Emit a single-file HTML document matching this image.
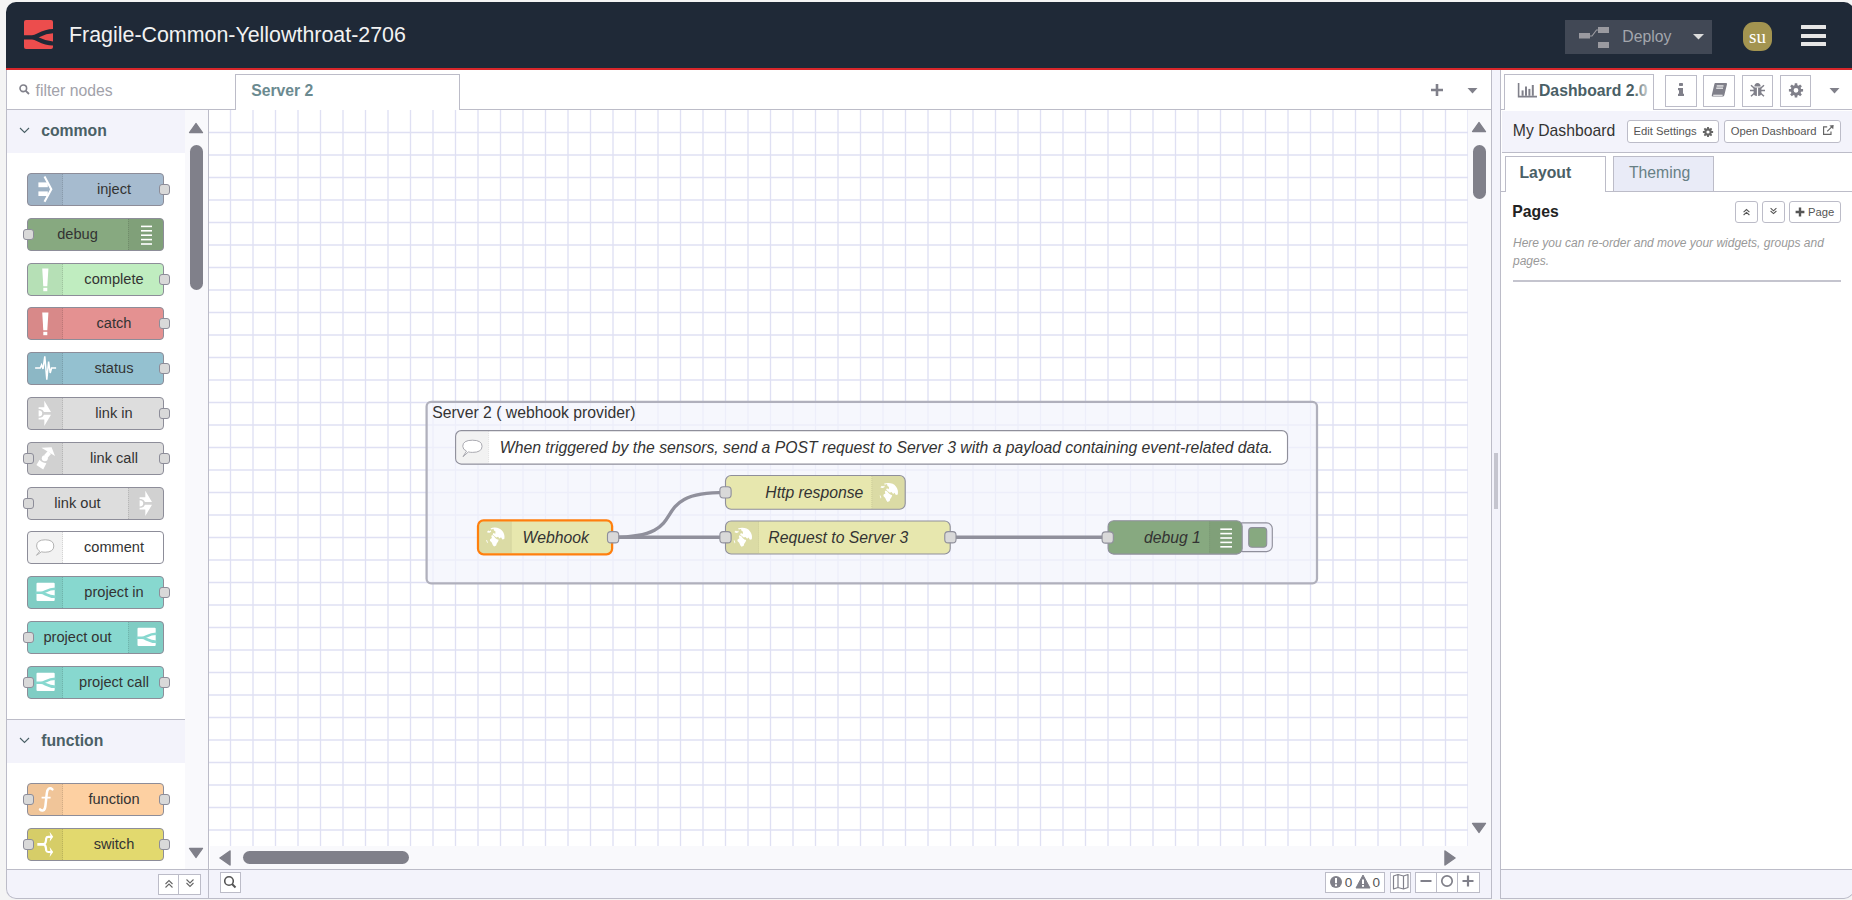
<!DOCTYPE html><html><head><meta charset="utf-8"><style>
*{box-sizing:border-box;margin:0;padding:0}
html,body{width:1852px;height:900px;overflow:hidden;position:relative;background:#f4f4f4;font-family:"Liberation Sans",sans-serif;}
.a{position:absolute}
.t{position:absolute;white-space:nowrap;line-height:1}
#clip{position:absolute;left:6px;top:2px;width:1848px;height:897px;border-radius:10px;overflow:hidden;background:#fff}
#pg{position:absolute;left:-6px;top:-2px;width:1853px;height:900px}
#frame{position:absolute;left:6px;top:70px;width:1848px;height:829px;border-radius:0 0 10px 10px;border:1px solid #bcbcc8;border-top:none;pointer-events:none}
.hl{position:absolute;height:1px;background:#bcbcc8}
.vl{position:absolute;width:1px;background:#bcbcc8}
.lav{background:#f3f3fb}
.pn{position:absolute;left:27px;width:137px;height:33px;border:1px solid #8d8d99;border-radius:4px;overflow:hidden}
.pi{position:absolute;top:0;width:35px;height:31px;background:rgba(0,0,0,0.05)}
.pi svg{position:absolute;left:0;top:0}
.pil{left:0;border-right:1px dotted rgba(0,0,0,0.12)}
.pir{right:0;border-left:1px dotted rgba(0,0,0,0.12)}
.pl{position:absolute;top:0;height:31px;line-height:31px;font-size:14.625px;color:#333;text-align:center;white-space:nowrap}
.pt{position:absolute;width:11px;height:11px;background:#d9d9d9;border:1px solid #8d8d99;border-radius:3px}
.fb{position:absolute;border:1px solid #bcbcc8;background:#fff}
</style></head><body>
<div id="clip"><div id="pg">
<div class="a" style="left:0;top:0;width:1853px;height:68px;background:#1f2937"></div>
<div class="a" style="left:0;top:68px;width:1853px;height:2px;background:#d8272b"></div>
<svg class="a" style="left:24px;top:20px" width="29" height="29" viewBox="0 0 29 29"><rect x="0" y="0" width="29" height="29" rx="2" fill="#ec4d4d"/><path d="M-1,17.3 H8 C14,17.3 17,11.2 30,11.2 M8,17.3 C14,17.3 17,23.5 30,23.5" stroke="#1f2937" stroke-width="4.2" fill="none"/></svg>
<div class="t" style="left:69.00px;top:24.88px;font-size:21.400px;color:#f2f2f2;font-weight:400;font-style:normal;">Fragile-Common-Yellowthroat-2706</div>
<div class="a" style="left:1565px;top:20px;width:147px;height:34px;background:#414855"></div>
<svg class="a" style="left:1579px;top:27px" width="31" height="22" viewBox="0 0 31 22"><rect x="0" y="6" width="11" height="5.5" fill="#9a9aa0"/><rect x="19" y="0" width="11" height="6" fill="#9a9aa0"/><rect x="19" y="15" width="11" height="6" fill="#9a9aa0"/><path d="M11,9 L13,9 L17.5,3 L19,3" stroke="#9a9aa0" stroke-width="1.2" fill="none"/></svg>
<div class="t" style="left:1622.30px;top:28.67px;font-size:15.750px;color:#a3a6ad;font-weight:400;font-style:normal;">Deploy</div>
<svg class="a" style="left:1693px;top:34px" width="11" height="6" viewBox="0 0 11 6"><path d="M0,0 H11 L5.5,5.5Z" fill="#dcdcdc"/></svg>
<div class="a" style="left:1743px;top:22px;width:29px;height:29px;border-radius:11px;background:#a39450"></div>
<div class="t" style="left:1743px;top:26.67px;width:29px;text-align:center;font-family:'Liberation Serif',serif;font-size:19px;color:#fff">su</div>
<div class="a" style="left:1801px;top:25.0px;width:25px;height:4px;background:#e6e6e6;border-radius:0.5px"></div>
<div class="a" style="left:1801px;top:33.5px;width:25px;height:4px;background:#e6e6e6;border-radius:0.5px"></div>
<div class="a" style="left:1801px;top:42.0px;width:25px;height:4px;background:#e6e6e6;border-radius:0.5px"></div>
<div class="a" style="left:7px;top:70px;width:201px;height:39px;background:#fff"></div>
<div class="hl" style="left:6px;top:109px;width:203px"></div>
<svg class="a" style="left:19px;top:84px" width="11" height="11" viewBox="0 0 11 11"><circle cx="4.3" cy="4.3" r="3.3" stroke="#80808a" stroke-width="1.6" fill="none"/><path d="M6.8,6.8 L10,10" stroke="#80808a" stroke-width="1.8"/></svg>
<div class="t" style="left:35.60px;top:82.57px;font-size:15.750px;color:#a2a2aa;font-weight:400;font-style:normal;">filter nodes</div>
<div class="a lav" style="left:7px;top:110px;width:178px;height:43px"></div>
<svg class="a" style="left:19px;top:127px" width="11" height="7" viewBox="0 0 11 7"><path d="M1,1 L5.5,5.5 L10,1" stroke="#4a6066" stroke-width="1.1" fill="none"/></svg>
<div class="t" style="left:41.20px;top:123.47px;font-size:15.750px;color:#4a6066;font-weight:700;font-style:normal;">common</div>
<div class="hl" style="left:7px;top:719px;width:178px"></div>
<div class="a lav" style="left:7px;top:720px;width:178px;height:43px"></div>
<svg class="a" style="left:19px;top:737px" width="11" height="7" viewBox="0 0 11 7"><path d="M1,1 L5.5,5.5 L10,1" stroke="#4a6066" stroke-width="1.1" fill="none"/></svg>
<div class="t" style="left:41.20px;top:733.47px;font-size:15.750px;color:#4a6066;font-weight:700;font-style:normal;">function</div>
<div class="a" style="left:185px;top:110px;width:23px;height:759px;background:#f9f9fc"></div>
<svg class="a" style="left:188px;top:122px" width="16" height="12" viewBox="0 0 16 12"><path d="M8,1.6 L14.4,10.6 H1.6 Z" fill="#80808a" stroke="#80808a" stroke-width="1.5" stroke-linejoin="round"/></svg>
<div class="a" style="left:190px;top:145px;width:13px;height:145px;border-radius:6.5px;background:#80808a"></div>
<svg class="a" style="left:188px;top:847px" width="16" height="12" viewBox="0 0 16 12"><path d="M8,10.4 L14.4,1.4 H1.6 Z" fill="#80808a" stroke="#80808a" stroke-width="1.5" stroke-linejoin="round"/></svg>
<div class="vl" style="left:208px;top:109px;height:790px"></div>
<div class="hl" style="left:6px;top:869px;width:203px"></div>
<div class="a lav" style="left:7px;top:870px;width:201px;height:30px"></div>
<div class="fb" style="left:158px;top:874px;width:21px;height:21px"></div>
<div class="fb" style="left:178px;top:874px;width:23px;height:21px"></div>
<svg class="a" style="left:163px;top:878px" width="12" height="12" viewBox="0 0 12 12"><path d="M2.5,6 L6,2.5 L9.5,6 M2.5,9.5 L6,6 L9.5,9.5" stroke="#666" stroke-width="1.1" fill="none"/></svg>
<svg class="a" style="left:184px;top:877px" width="12" height="12" viewBox="0 0 12 12"><path d="M2.5,2.5 L6,6 L9.5,2.5 M2.5,6 L6,9.5 L9.5,6" stroke="#666" stroke-width="1.1" fill="none"/></svg>
<div class="pn" style="top:173.20px;background:#a6bbcf">
<div class="pi pil"><svg width="35" height="31" viewBox="0 0 35 31"><rect x="10.4" y="8.4" width="9.4" height="4.8" fill="#fff"/><rect x="10.4" y="17.4" width="9.4" height="4.6" fill="#fff"/><path d="M16.5,2.6 L23.3,15.2 L16.5,27.8" stroke="#fff" stroke-width="2.1" fill="none" stroke-linejoin="miter"/></svg></div>
<div class="pl" style="left:36px;width:100px">inject</div>
</div>
<div class="pt" style="left:159px;top:184.20px"></div>
<div class="pn" style="top:217.96px;background:#87a980">
<div class="pi pir"><svg width="35" height="31" viewBox="0 0 35 31"><rect x="12" y="6.6" width="11" height="1.6" fill="#fff"/><rect x="12" y="11.0" width="11" height="1.6" fill="#fff"/><rect x="12" y="15.4" width="11" height="1.6" fill="#fff"/><rect x="12" y="19.8" width="11" height="1.6" fill="#fff"/><rect x="12" y="24.2" width="11" height="1.6" fill="#fff"/></svg></div>
<div class="pl" style="left:-1px;width:101px">debug</div>
</div>
<div class="pt" style="left:23px;top:228.96px"></div>
<div class="pn" style="top:262.72px;background:#c0edc0">
<div class="pi pil"><svg width="35" height="31" viewBox="0 0 35 31"><path d="M14.2,4.6 H20.4 L19.3,22.2 H15.3 Z" fill="#fff"/><rect x="15.3" y="23.8" width="4" height="3.4" fill="#fff"/></svg></div>
<div class="pl" style="left:36px;width:100px">complete</div>
</div>
<div class="pt" style="left:159px;top:273.72px"></div>
<div class="pn" style="top:307.48px;background:#e49191">
<div class="pi pil"><svg width="35" height="31" viewBox="0 0 35 31"><path d="M14.2,4.6 H20.4 L19.3,22.2 H15.3 Z" fill="#fff"/><rect x="15.3" y="23.8" width="4" height="3.4" fill="#fff"/></svg></div>
<div class="pl" style="left:36px;width:100px">catch</div>
</div>
<div class="pt" style="left:159px;top:318.48px"></div>
<div class="pn" style="top:352.24px;background:#94c1d0">
<div class="pi pil"><svg width="35" height="31" viewBox="0 0 35 31"><path d="M7.1,15 H12.3 L13.6,11.8 L15,16 L16.8,3.4 L18.8,26.6 L20.6,8.6 L22.2,20 L23.6,15 H28.1" stroke="#fff" stroke-width="1.5" fill="none" stroke-linejoin="miter"/></svg></div>
<div class="pl" style="left:36px;width:100px">status</div>
</div>
<div class="pt" style="left:159px;top:363.24px"></div>
<div class="pn" style="top:397.00px;background:#dddddd">
<div class="pi pil"><svg width="35" height="31" viewBox="0 0 35 31"><g fill="#fff"><path d="M16.3,2.7 L23,14.1 H16 Q15,11.4 12.2,11.1 H10.6 V9.3 H16.3 Z"/><path d="M16.3,28.1 L23,16.7 H16 Q15,19.4 12.2,19.7 H10.6 V21.5 H16.3 Z"/><path d="M10.6,12.3 Q14.2,12.5 14.2,15.4 Q14.2,18.3 10.6,18.5 Z"/></g></svg></div>
<div class="pl" style="left:36px;width:100px">link in</div>
</div>
<div class="pt" style="left:159px;top:408.00px"></div>
<div class="pn" style="top:441.76px;background:#dddddd">
<div class="pi pil"><svg width="35" height="31" viewBox="0 0 35 31"><g fill="#fff"><path d="M13.4,4.8 L23.6,4.3 L27,13 Z"/><path d="M21.4,9.6 L17.8,13.4" stroke="#fff" stroke-width="4.4"/><circle cx="16.8" cy="15.2" r="3"/><path d="M8.4,22 L11.6,16.8 Q13.4,19.6 18.4,20.2 L15.2,26.6 Z"/></g></svg></div>
<div class="pl" style="left:36px;width:100px">link call</div>
</div>
<div class="pt" style="left:23px;top:452.76px"></div>
<div class="pt" style="left:159px;top:452.76px"></div>
<div class="pn" style="top:486.52px;background:#dddddd">
<div class="pi pir"><svg width="35" height="31" viewBox="0 0 35 31"><g fill="#fff"><path d="M16.3,2.7 L23,14.1 H16 Q15,11.4 12.2,11.1 H10.6 V9.3 H16.3 Z"/><path d="M16.3,28.1 L23,16.7 H16 Q15,19.4 12.2,19.7 H10.6 V21.5 H16.3 Z"/><path d="M10.6,12.3 Q14.2,12.5 14.2,15.4 Q14.2,18.3 10.6,18.5 Z"/></g></svg></div>
<div class="pl" style="left:-1px;width:101px">link out</div>
</div>
<div class="pt" style="left:23px;top:497.52px"></div>
<div class="pn" style="top:531.28px;background:#ffffff">
<div class="pi pil"><svg width="35" height="31" viewBox="0 0 35 31"><path d="M8.5,23.3 L11.8,19.2 Q8.6,17.6 8.6,14 Q8.6,7.8 17.2,7.8 Q25.8,7.8 25.8,14 Q25.8,20.2 17.2,20.2 Q15,20.2 13.4,19.8 Z" fill="#fff" stroke="#aaa" stroke-width="0.9" stroke-linejoin="round"/></svg></div>
<div class="pl" style="left:36px;width:100px">comment</div>
</div>
<div class="pn" style="top:576.04px;background:#87d8cf">
<div class="pi pil"><svg width="35" height="31" viewBox="0 0 35 31"><rect x="8.5" y="5.8" width="18.2" height="18.2" rx="1" fill="#fff"/><path d="M7.5,15.8 H13 C17,15.8 19,11.8 27.5,11.8 M13,15.8 C17,15.8 19,19.8 27.5,19.8" stroke="#87d8cf" stroke-width="2.6" fill="none"/></svg></div>
<div class="pl" style="left:36px;width:100px">project in</div>
</div>
<div class="pt" style="left:159px;top:587.04px"></div>
<div class="pn" style="top:620.80px;background:#87d8cf">
<div class="pi pir"><svg width="35" height="31" viewBox="0 0 35 31"><rect x="8.5" y="5.8" width="18.2" height="18.2" rx="1" fill="#fff"/><path d="M7.5,15.8 H13 C17,15.8 19,11.8 27.5,11.8 M13,15.8 C17,15.8 19,19.8 27.5,19.8" stroke="#87d8cf" stroke-width="2.6" fill="none"/></svg></div>
<div class="pl" style="left:-1px;width:101px">project out</div>
</div>
<div class="pt" style="left:23px;top:631.80px"></div>
<div class="pn" style="top:665.56px;background:#87d8cf">
<div class="pi pil"><svg width="35" height="31" viewBox="0 0 35 31"><rect x="8.5" y="5.8" width="18.2" height="18.2" rx="1" fill="#fff"/><path d="M7.5,15.8 H13 C17,15.8 19,11.8 27.5,11.8 M13,15.8 C17,15.8 19,19.8 27.5,19.8" stroke="#87d8cf" stroke-width="2.6" fill="none"/></svg></div>
<div class="pl" style="left:36px;width:100px">project call</div>
</div>
<div class="pt" style="left:23px;top:676.56px"></div>
<div class="pt" style="left:159px;top:676.56px"></div>
<div class="pn" style="top:783.40px;background:#fdd0a2">
<div class="pi pil"><svg width="35" height="31" viewBox="0 0 35 31"><path d="M24.4,5.4 Q22.4,3.6 20.6,4.8 Q19.2,5.8 18.8,9.4 L17.4,22 Q17,25.6 15.2,26.4 Q13.4,27 12,25.4" stroke="#fff" stroke-width="2.5" fill="none" stroke-linecap="round"/><path d="M13.6,13.6 H22.6" stroke="#fff" stroke-width="1.8"/></svg></div>
<div class="pl" style="left:36px;width:100px">function</div>
</div>
<div class="pt" style="left:23px;top:794.40px"></div>
<div class="pt" style="left:159px;top:794.40px"></div>
<div class="pn" style="top:828.20px;background:#e2d96e">
<div class="pi pil"><svg width="35" height="31" viewBox="0 0 35 31"><path d="M9.3,15.4 H15.4" stroke="#fff" stroke-width="2.8" fill="none"/><path d="M14.6,15.4 Q17.6,15.4 17.9,12 L18.2,9.4 Q18.5,7.8 20.2,7.8 H23 M14.6,15.4 Q17.6,15.4 17.9,18.8 L18.2,21.4 Q18.5,23 20.2,23 H23" stroke="#fff" stroke-width="2.2" fill="none"/><path d="M21.6,2.8 L25.2,7.8 L21.6,12.8 L22.6,7.8Z M21.6,18 L25.2,23 L21.6,28 L22.6,23Z" fill="#fff"/></svg></div>
<div class="pl" style="left:36px;width:100px">switch</div>
</div>
<div class="pt" style="left:23px;top:839.20px"></div>
<div class="pt" style="left:159px;top:839.20px"></div>
<div class="hl" style="left:209px;top:109px;width:1282px"></div>
<div class="a" style="left:235px;top:74px;width:225px;height:36px;border:1px solid #bcbcc8;border-bottom:none;background:#fff"></div>
<div class="t" style="left:251.20px;top:82.57px;font-size:15.750px;color:#6b8a90;font-weight:700;font-style:normal;">Server 2</div>
<svg class="a" style="left:1430px;top:83px" width="14" height="14" viewBox="0 0 14 14"><path d="M7,1 V13 M1,7 H13" stroke="#80808a" stroke-width="2.6"/></svg>
<svg class="a" style="left:1467px;top:88px" width="11" height="6" viewBox="0 0 11 6"><path d="M0.5,0 H10.5 L5.5,5.5Z" fill="#80808a"/></svg>
<svg class="a" style="left:209px;top:110px" width="1259" height="736"><g stroke="#dfe0f3" stroke-width="1.35"><line x1="21.50" y1="0" x2="21.50" y2="736"/><line x1="44.00" y1="0" x2="44.00" y2="736"/><line x1="66.50" y1="0" x2="66.50" y2="736"/><line x1="89.00" y1="0" x2="89.00" y2="736"/><line x1="111.50" y1="0" x2="111.50" y2="736"/><line x1="134.00" y1="0" x2="134.00" y2="736"/><line x1="156.50" y1="0" x2="156.50" y2="736"/><line x1="179.00" y1="0" x2="179.00" y2="736"/><line x1="201.50" y1="0" x2="201.50" y2="736"/><line x1="224.00" y1="0" x2="224.00" y2="736"/><line x1="246.50" y1="0" x2="246.50" y2="736"/><line x1="269.00" y1="0" x2="269.00" y2="736"/><line x1="291.50" y1="0" x2="291.50" y2="736"/><line x1="314.00" y1="0" x2="314.00" y2="736"/><line x1="336.50" y1="0" x2="336.50" y2="736"/><line x1="359.00" y1="0" x2="359.00" y2="736"/><line x1="381.50" y1="0" x2="381.50" y2="736"/><line x1="404.00" y1="0" x2="404.00" y2="736"/><line x1="426.50" y1="0" x2="426.50" y2="736"/><line x1="449.00" y1="0" x2="449.00" y2="736"/><line x1="471.50" y1="0" x2="471.50" y2="736"/><line x1="494.00" y1="0" x2="494.00" y2="736"/><line x1="516.50" y1="0" x2="516.50" y2="736"/><line x1="539.00" y1="0" x2="539.00" y2="736"/><line x1="561.50" y1="0" x2="561.50" y2="736"/><line x1="584.00" y1="0" x2="584.00" y2="736"/><line x1="606.50" y1="0" x2="606.50" y2="736"/><line x1="629.00" y1="0" x2="629.00" y2="736"/><line x1="651.50" y1="0" x2="651.50" y2="736"/><line x1="674.00" y1="0" x2="674.00" y2="736"/><line x1="696.50" y1="0" x2="696.50" y2="736"/><line x1="719.00" y1="0" x2="719.00" y2="736"/><line x1="741.50" y1="0" x2="741.50" y2="736"/><line x1="764.00" y1="0" x2="764.00" y2="736"/><line x1="786.50" y1="0" x2="786.50" y2="736"/><line x1="809.00" y1="0" x2="809.00" y2="736"/><line x1="831.50" y1="0" x2="831.50" y2="736"/><line x1="854.00" y1="0" x2="854.00" y2="736"/><line x1="876.50" y1="0" x2="876.50" y2="736"/><line x1="899.00" y1="0" x2="899.00" y2="736"/><line x1="921.50" y1="0" x2="921.50" y2="736"/><line x1="944.00" y1="0" x2="944.00" y2="736"/><line x1="966.50" y1="0" x2="966.50" y2="736"/><line x1="989.00" y1="0" x2="989.00" y2="736"/><line x1="1011.50" y1="0" x2="1011.50" y2="736"/><line x1="1034.00" y1="0" x2="1034.00" y2="736"/><line x1="1056.50" y1="0" x2="1056.50" y2="736"/><line x1="1079.00" y1="0" x2="1079.00" y2="736"/><line x1="1101.50" y1="0" x2="1101.50" y2="736"/><line x1="1124.00" y1="0" x2="1124.00" y2="736"/><line x1="1146.50" y1="0" x2="1146.50" y2="736"/><line x1="1169.00" y1="0" x2="1169.00" y2="736"/><line x1="1191.50" y1="0" x2="1191.50" y2="736"/><line x1="1214.00" y1="0" x2="1214.00" y2="736"/><line x1="1236.50" y1="0" x2="1236.50" y2="736"/><line x1="1259.00" y1="0" x2="1259.00" y2="736"/><line x1="0" y1="22.50" x2="1259" y2="22.50"/><line x1="0" y1="45.00" x2="1259" y2="45.00"/><line x1="0" y1="67.50" x2="1259" y2="67.50"/><line x1="0" y1="90.00" x2="1259" y2="90.00"/><line x1="0" y1="112.50" x2="1259" y2="112.50"/><line x1="0" y1="135.00" x2="1259" y2="135.00"/><line x1="0" y1="157.50" x2="1259" y2="157.50"/><line x1="0" y1="180.00" x2="1259" y2="180.00"/><line x1="0" y1="202.50" x2="1259" y2="202.50"/><line x1="0" y1="225.00" x2="1259" y2="225.00"/><line x1="0" y1="247.50" x2="1259" y2="247.50"/><line x1="0" y1="270.00" x2="1259" y2="270.00"/><line x1="0" y1="292.50" x2="1259" y2="292.50"/><line x1="0" y1="315.00" x2="1259" y2="315.00"/><line x1="0" y1="337.50" x2="1259" y2="337.50"/><line x1="0" y1="360.00" x2="1259" y2="360.00"/><line x1="0" y1="382.50" x2="1259" y2="382.50"/><line x1="0" y1="405.00" x2="1259" y2="405.00"/><line x1="0" y1="427.50" x2="1259" y2="427.50"/><line x1="0" y1="450.00" x2="1259" y2="450.00"/><line x1="0" y1="472.50" x2="1259" y2="472.50"/><line x1="0" y1="495.00" x2="1259" y2="495.00"/><line x1="0" y1="517.50" x2="1259" y2="517.50"/><line x1="0" y1="540.00" x2="1259" y2="540.00"/><line x1="0" y1="562.50" x2="1259" y2="562.50"/><line x1="0" y1="585.00" x2="1259" y2="585.00"/><line x1="0" y1="607.50" x2="1259" y2="607.50"/><line x1="0" y1="630.00" x2="1259" y2="630.00"/><line x1="0" y1="652.50" x2="1259" y2="652.50"/><line x1="0" y1="675.00" x2="1259" y2="675.00"/><line x1="0" y1="697.50" x2="1259" y2="697.50"/><line x1="0" y1="720.00" x2="1259" y2="720.00"/></g></svg>
<div class="a" style="left:1468px;top:110px;width:23px;height:759px;background:#f9f9fc"></div>
<div class="a" style="left:210px;top:846px;width:1258px;height:23px;background:#f9f9fc"></div>
<svg class="a" style="left:1471px;top:121px" width="16" height="12" viewBox="0 0 16 12"><path d="M8,1.6 L14.4,10.6 H1.6 Z" fill="#80808a" stroke="#80808a" stroke-width="1.5" stroke-linejoin="round"/></svg>
<div class="a" style="left:1473px;top:145px;width:13px;height:54px;border-radius:6.5px;background:#80808a"></div>
<svg class="a" style="left:1471px;top:822px" width="16" height="12" viewBox="0 0 16 12"><path d="M8,10.4 L14.4,1.4 H1.6 Z" fill="#80808a" stroke="#80808a" stroke-width="1.5" stroke-linejoin="round"/></svg>
<svg class="a" style="left:219px;top:850px" width="12" height="16" viewBox="0 0 12 16"><path d="M1,8 L11,1 V15 Z" fill="#80808a" stroke="#80808a" stroke-width="1.5" stroke-linejoin="round"/></svg>
<div class="a" style="left:243px;top:851px;width:166px;height:13px;border-radius:6.5px;background:#80808a"></div>
<svg class="a" style="left:1444px;top:850px" width="12" height="16" viewBox="0 0 12 16"><path d="M11,8 L1,1 V15 Z" fill="#80808a" stroke="#80808a" stroke-width="1.5" stroke-linejoin="round"/></svg>
<div class="hl" style="left:209px;top:869px;width:1282px"></div>
<div class="a lav" style="left:209px;top:870px;width:1282px;height:30px"></div>
<div class="fb" style="left:220px;top:872px;width:21px;height:21px"></div>
<svg class="a" style="left:223px;top:875px" width="15" height="15" viewBox="0 0 15 15"><circle cx="6" cy="6" r="4.3" stroke="#555" stroke-width="1.6" fill="none"/><path d="M9,9 L12.5,12.5" stroke="#555" stroke-width="2"/></svg>
<div class="fb" style="left:1325px;top:872px;width:60px;height:21px"></div>
<div class="fb" style="left:1390px;top:872px;width:21px;height:21px"></div>
<div class="fb" style="left:1415px;top:872px;width:65px;height:21px"></div>
<div class="vl" style="left:1436px;top:872px;height:21px"></div>
<div class="vl" style="left:1457px;top:872px;height:21px"></div>
<div class="vl" style="left:1491px;top:70px;height:829px"></div>
<div class="a lav" style="left:1492px;top:70px;width:8px;height:830px"></div>
<div class="vl" style="left:1500px;top:70px;height:829px"></div>
<div class="a" style="left:1494px;top:453px;width:4px;height:56px;background:#c5c5cf"></div>
<div class="hl" style="left:1501px;top:109px;width:352px"></div>
<div class="a" style="left:1504px;top:74px;width:150px;height:36px;border:1px solid #bcbcc8;border-bottom:none;background:#fff"></div>
<div class="t" style="left:1539.00px;top:82.67px;font-size:15.750px;color:#4a6066;font-weight:700;font-style:normal;">Dashboard 2.0</div>
<div class="a" style="left:1633px;top:80px;width:16px;height:22px;background:linear-gradient(to right,rgba(255,255,255,0),rgba(255,255,255,0.75))"></div>
<div class="fb" style="left:1665px;top:75px;width:32px;height:32px"></div>
<div class="fb" style="left:1703px;top:75px;width:32px;height:32px"></div>
<div class="fb" style="left:1742px;top:75px;width:31px;height:32px"></div>
<div class="fb" style="left:1780px;top:75px;width:31px;height:32px"></div>
<svg class="a" style="left:1829px;top:88px" width="11" height="6" viewBox="0 0 11 6"><path d="M0.5,0 H10.5 L5.5,5.5Z" fill="#80808a"/></svg>
<div class="a lav" style="left:1502px;top:111px;width:351px;height:41px"></div>
<div class="hl" style="left:1502px;top:152px;width:351px"></div>
<div class="t" style="left:1512.80px;top:122.77px;font-size:15.750px;color:#333;font-weight:400;font-style:normal;">My Dashboard</div>
<div class="fb" style="left:1627px;top:120px;width:92px;height:23px;border-radius:3px"></div>
<div class="t" style="left:1633.50px;top:126.48px;font-size:11.250px;color:#555;font-weight:400;font-style:normal;">Edit Settings</div>
<div class="fb" style="left:1724px;top:120px;width:117px;height:23px;border-radius:3px"></div>
<div class="t" style="left:1730.80px;top:126.48px;font-size:11.250px;color:#555;font-weight:400;font-style:normal;">Open Dashboard</div>
<div class="hl" style="left:1501px;top:191px;width:352px"></div>
<div class="a" style="left:1505px;top:156px;width:101px;height:36px;border:1px solid #bcbcc8;border-bottom:none;background:#fff"></div>
<div class="a" style="left:1613px;top:156px;width:101px;height:35px;border:1px solid #bcbcc8;border-bottom:none;background:#e9ebf7"></div>
<div class="t" style="left:1519.50px;top:164.67px;font-size:15.750px;color:#4a6066;font-weight:700;font-style:normal;">Layout</div>
<div class="t" style="left:1628.90px;top:164.67px;font-size:15.750px;color:#677f85;font-weight:400;font-style:normal;">Theming</div>
<div class="t" style="left:1512.30px;top:204.27px;font-size:15.750px;color:#222;font-weight:700;font-style:normal;">Pages</div>
<div class="fb" style="left:1735px;top:201px;width:23px;height:22px;border-radius:3px"></div>
<div class="fb" style="left:1762px;top:201px;width:23px;height:22px;border-radius:3px"></div>
<div class="fb" style="left:1789px;top:201px;width:52px;height:22px;border-radius:3px"></div>
<div class="t" style="left:1513.00px;top:236.84px;font-size:12.000px;color:#999;font-weight:400;font-style:italic;">Here you can re-order and move your widgets, groups and</div>
<div class="t" style="left:1513.00px;top:254.84px;font-size:12.000px;color:#999;font-weight:400;font-style:italic;">pages.</div>
<div class="a" style="left:1513px;top:280px;width:328px;height:2px;background:#c4c4ce"></div>
<div class="hl" style="left:1501px;top:869px;width:352px"></div>
<div class="a lav" style="left:1501px;top:870px;width:352px;height:30px"></div>
<svg class="a" style="left:1517px;top:82px" width="21" height="16" viewBox="0 0 21 16"><path d="M1.6,1 V14.6 H20" stroke="#80808a" stroke-width="1.6" fill="none"/><rect x="4.6" y="8.4" width="2" height="5.4" fill="#80808a"/><rect x="8" y="4.5" width="2" height="9.3" fill="#80808a"/><rect x="11.4" y="6.9" width="2" height="6.9" fill="#80808a"/><rect x="14.8" y="3" width="2" height="10.8" fill="#80808a"/></svg>
<svg class="a" style="left:1677px;top:82px" width="8" height="15" viewBox="0 0 8 15"><rect x="2" y="1" width="4" height="3" rx="0.8" fill="#80808a"/><path d="M1,6 H6 V11.8 H7 V14 H1 V11.8 H2 V8.2 H1 Z" fill="#80808a"/></svg>
<svg class="a" style="left:1711px;top:82px" width="17" height="16" viewBox="0 0 17 16"><path d="M4.2,1 H15 Q16.3,1 16,2.3 L13.3,13.3 Q13,14.6 11.7,14.6 H1.8 Q0.3,14.6 0.8,13 L3.4,2 Q3.7,1 4.2,1 Z" fill="#80808a"/><rect x="5.7" y="3.4" width="6.8" height="1.1" fill="#fff"/><rect x="5.2" y="5.6" width="6.8" height="1.1" fill="#fff"/><path d="M2.2,13.3 H11.6" stroke="#fff" stroke-width="1.1"/></svg>
<svg class="a" style="left:1749px;top:82px" width="17" height="15" viewBox="0 0 17 15"><path d="M5.3,4.5 Q5.6,0.9 8.5,0.9 Q11.4,0.9 11.7,4.5 Z" fill="#80808a"/><path d="M4.6,5.4 H12.4 V11 Q12.4,14 9.1,14 V5.8 H7.9 V14 Q4.6,14 4.6,11 Z" fill="#80808a"/><path d="M2,3.2 L5.4,6.2 M15,3.2 L11.6,6.2 M1,8.6 H5 M16,8.6 H12 M2,14.2 L5.4,11.2 M15,14.2 L11.6,11.2" stroke="#80808a" stroke-width="1.5"/></svg>
<svg class="a" style="left:1787px;top:82px" width="18" height="18" viewBox="0 0 18 18"><path d="M14.11,6.89 L16.09,7.06 L16.09,9.54 L14.11,9.71 L13.61,10.91 L14.89,12.44 L13.14,14.19 L11.61,12.91 L10.41,13.41 L10.24,15.39 L7.76,15.39 L7.59,13.41 L6.39,12.91 L4.86,14.19 L3.11,12.44 L4.39,10.91 L3.89,9.71 L1.91,9.54 L1.91,7.06 L3.89,6.89 L4.39,5.69 L3.11,4.16 L4.86,2.41 L6.39,3.69 L7.59,3.19 L7.76,1.21 L10.24,1.21 L10.41,3.19 L11.61,3.69 L13.14,2.41 L14.89,4.16 L13.61,5.69 Z M6.60,8.30 a2.40,2.40 0 1,0 4.80,0 a2.40,2.40 0 1,0 -4.80,0 Z" fill="#80808a" fill-rule="evenodd"/></svg>
<svg class="a" style="left:1702px;top:126px" width="12" height="12" viewBox="0 0 12 12"><path d="M9.66,4.99 L11.12,5.11 L11.12,6.89 L9.66,7.01 L9.31,7.87 L10.25,8.99 L8.99,10.25 L7.87,9.31 L7.01,9.66 L6.89,11.12 L5.11,11.12 L4.99,9.66 L4.13,9.31 L3.01,10.25 L1.75,8.99 L2.69,7.87 L2.34,7.01 L0.88,6.89 L0.88,5.11 L2.34,4.99 L2.69,4.13 L1.75,3.01 L3.01,1.75 L4.13,2.69 L4.99,2.34 L5.11,0.88 L6.89,0.88 L7.01,2.34 L7.87,2.69 L8.99,1.75 L10.25,3.01 L9.31,4.13 Z M4.40,6.00 a1.60,1.60 0 1,0 3.20,0 a1.60,1.60 0 1,0 -3.20,0 Z" fill="#666" fill-rule="evenodd"/></svg>
<svg class="a" style="left:1821px;top:124px" width="14" height="14" viewBox="0 0 14 14"><path d="M6.2,2.9 H2.6 V10.4 H10 V7.4" stroke="#666" stroke-width="1.15" fill="none"/><path d="M6.2,7.4 L11,2.6" stroke="#666" stroke-width="1.2"/><path d="M12.7,0.9 L8.4,1.4 L12.2,5.2Z" fill="#666"/></svg>
<svg class="a" style="left:1741px;top:207px" width="11" height="10" viewBox="0 0 11 10"><path d="M2.6,5.2 L5.5,2.6 L8.4,5.2 M2.6,8 L5.5,5.4 L8.4,8" stroke="#555" stroke-width="1.1" fill="none"/></svg>
<svg class="a" style="left:1768px;top:206px" width="11" height="10" viewBox="0 0 11 10"><path d="M2.6,2.2 L5.5,4.8 L8.4,2.2 M2.6,5 L5.5,7.6 L8.4,5" stroke="#555" stroke-width="1.1" fill="none"/></svg>
<svg class="a" style="left:1795px;top:207px" width="10" height="10" viewBox="0 0 10 10"><path d="M5,0.6 V9.4 M0.6,5 H9.4" stroke="#555" stroke-width="2.4"/></svg>
<div class="t" style="left:1808.00px;top:207.48px;font-size:11.250px;color:#555;font-weight:400;font-style:normal;">Page</div>
<svg class="a" style="left:1329px;top:875px" width="14" height="14" viewBox="0 0 14 14"><circle cx="7" cy="7" r="6" fill="#80808a"/><rect x="6" y="3" width="2" height="5.2" fill="#fff"/><rect x="6" y="9.3" width="2" height="1.9" fill="#fff"/></svg>
<div class="t" style="left:1344.80px;top:876.07px;font-size:13.500px;color:#555;font-weight:400;font-style:normal;">0</div>
<svg class="a" style="left:1355px;top:874px" width="16" height="15" viewBox="0 0 16 15"><path d="M8,1 L15,14 H1 Z" fill="#80808a" stroke="#80808a" stroke-width="1" stroke-linejoin="round"/><rect x="7" y="5.5" width="2" height="4.5" fill="#fff"/><rect x="7" y="11" width="2" height="1.8" fill="#fff"/></svg>
<div class="t" style="left:1372.60px;top:876.07px;font-size:13.500px;color:#555;font-weight:400;font-style:normal;">0</div>
<svg class="a" style="left:1392px;top:873px" width="18" height="18" viewBox="0 0 18 18"><path d="M1.5,3 L6,1.5 L11.5,3 L16,1.5 V14.5 L11.5,16 L6,14.5 L1.5,16 Z M6,1.5 V14.5 M11.5,3 V16" stroke="#80808a" stroke-width="1.2" fill="none" stroke-linejoin="round"/></svg>
<svg class="a" style="left:1419px;top:874px" width="14" height="14" viewBox="0 0 14 14"><path d="M1.5,7 H12.5" stroke="#80808a" stroke-width="2"/></svg>
<svg class="a" style="left:1440px;top:874px" width="14" height="14" viewBox="0 0 14 14"><circle cx="7" cy="7" r="5.2" stroke="#80808a" stroke-width="1.7" fill="none"/></svg>
<svg class="a" style="left:1461px;top:874px" width="14" height="14" viewBox="0 0 14 14"><path d="M1.5,7 H12.5 M7,1.5 V12.5" stroke="#80808a" stroke-width="2.2"/></svg>
<svg class="a" style="left:209px;top:110px;overflow:hidden" width="1259" height="736"><g transform="translate(-209,-110)"><rect x="426.6" y="401.9" width="890.4" height="181.4" rx="4.5" fill="rgba(242,243,252,0.7)" stroke="#b0b0bc" stroke-width="2.25"/><path d="M613.1,537.2 C697.5,537.2 641.1,492.4 725.5,492.4" stroke="#90909c" stroke-width="3.375" fill="none"/><path d="M613.1,537.2 H725.5 M950.4,537.2 H1107.7" stroke="#90909c" stroke-width="3.375" fill="none"/><rect x="455.60" y="430.60" width="831.90" height="33.50" rx="5.60" fill="#fff"/><path d="M461.20,431.16 H488.60 V463.54 H461.20 A5.04,5.04 0 0,1 456.16,458.50 V436.20 A5.04,5.04 0 0,1 461.20,431.16Z" fill="rgba(0,0,0,0.05)"/><path d="M488.60,431.16 V463.54" stroke="rgba(0,0,0,0.1)" stroke-width="1" stroke-dasharray="1,1"/><rect x="455.60" y="430.60" width="831.90" height="33.50" rx="5.60" fill="none" stroke="#8f8f9b" stroke-width="1.125"/><g transform="translate(472.4,446.3)"><path d="M-9.4,10.4 L-5.9,4.8 Q-9.65,3.2 -9.65,0 Q-9.65,-6.1 0,-6.1 Q9.65,-6.1 9.65,0 Q9.65,6.1 0,6.1 Q-2.2,6.1 -4,5.6 Z" fill="#fff" stroke="#a0a0a8" stroke-width="0.9" stroke-linejoin="round"/></g><rect x="725.50" y="475.50" width="179.70" height="33.70" rx="5.60" fill="#e7e7ae"/><path d="M871.80,476.06 H899.60 A5.04,5.04 0 0,1 904.64,481.10 V503.60 A5.04,5.04 0 0,1 899.60,508.64 H871.80Z" fill="rgba(0,0,0,0.05)"/><path d="M871.80,476.06 V508.64" stroke="rgba(0,0,0,0.1)" stroke-width="1" stroke-dasharray="1,1"/><rect x="725.50" y="475.50" width="179.70" height="33.70" rx="5.60" fill="none" stroke="#8f8f9b" stroke-width="1.125"/><g transform="translate(888.5,492.4)"><g fill="#fff"><path d="M0,-9.5 A9.5,9.5 0 0,1 9.3,2 L7.4,2.5 L6,0.3 L4.6,1.6 L3,-0.3 L1.3,0.4 L-0.6,-1.1 L-2.4,-2.6 L-1.6,-4.1 L0.3,-3.2 L0.5,-5.4 L-1,-6.5 L-1.5,-8.3 L-3.6,-7.6 L-4.6,-8.6 A9.5,9.5 0 0,1 0,-9.5Z"/><path d="M-8.1,-5.1 L-6.6,-6.6 L-5.4,-5.8 L-4.3,-6.8 L-3.8,-5.3 L-5.6,-4.3 L-7.4,-4.6Z"/><path d="M-2.9,-2 L-3.7,-0.9 L-3.1,1.1 L-4.9,2.2 L-5.1,3.7 L-3.3,5.6 L-2.1,8.2 L-0.9,9.6 L1.2,8.6 L1.6,6.8 L3.1,4.6 L3.7,2.8 L1.9,2.2 L0.2,0.9 L-1.1,-0.9Z"/><path d="M-8.9,3.2 L-8,3 L-7.2,5.6 L-7.7,6.2Z"/></g></g><rect x="478.00" y="520.40" width="134.10" height="33.90" rx="5.60" fill="#e7e7ae"/><path d="M483.60,521.52 H511.30 V553.17 H483.60 A4.47,4.47 0 0,1 479.12,548.70 V526.00 A4.47,4.47 0 0,1 483.60,521.52Z" fill="rgba(0,0,0,0.05)"/><path d="M511.30,521.52 V553.17" stroke="rgba(0,0,0,0.1)" stroke-width="1" stroke-dasharray="1,1"/><rect x="478.00" y="520.40" width="134.10" height="33.90" rx="5.60" fill="none" stroke="#ff7f0e" stroke-width="2.25"/><g transform="translate(495.0,537.0)"><g fill="#fff"><path d="M0,-9.5 A9.5,9.5 0 0,1 9.3,2 L7.4,2.5 L6,0.3 L4.6,1.6 L3,-0.3 L1.3,0.4 L-0.6,-1.1 L-2.4,-2.6 L-1.6,-4.1 L0.3,-3.2 L0.5,-5.4 L-1,-6.5 L-1.5,-8.3 L-3.6,-7.6 L-4.6,-8.6 A9.5,9.5 0 0,1 0,-9.5Z"/><path d="M-8.1,-5.1 L-6.6,-6.6 L-5.4,-5.8 L-4.3,-6.8 L-3.8,-5.3 L-5.6,-4.3 L-7.4,-4.6Z"/><path d="M-2.9,-2 L-3.7,-0.9 L-3.1,1.1 L-4.9,2.2 L-5.1,3.7 L-3.3,5.6 L-2.1,8.2 L-0.9,9.6 L1.2,8.6 L1.6,6.8 L3.1,4.6 L3.7,2.8 L1.9,2.2 L0.2,0.9 L-1.1,-0.9Z"/><path d="M-8.9,3.2 L-8,3 L-7.2,5.6 L-7.7,6.2Z"/></g></g><rect x="725.50" y="521.00" width="224.70" height="33.00" rx="5.60" fill="#e7e7ae"/><path d="M731.10,521.56 H758.50 V553.44 H731.10 A5.04,5.04 0 0,1 726.06,548.40 V526.60 A5.04,5.04 0 0,1 731.10,521.56Z" fill="rgba(0,0,0,0.05)"/><path d="M758.50,521.56 V553.44" stroke="rgba(0,0,0,0.1)" stroke-width="1" stroke-dasharray="1,1"/><rect x="725.50" y="521.00" width="224.70" height="33.00" rx="5.60" fill="none" stroke="#8f8f9b" stroke-width="1.125"/><g transform="translate(742.5,537.2)"><g fill="#fff"><path d="M0,-9.5 A9.5,9.5 0 0,1 9.3,2 L7.4,2.5 L6,0.3 L4.6,1.6 L3,-0.3 L1.3,0.4 L-0.6,-1.1 L-2.4,-2.6 L-1.6,-4.1 L0.3,-3.2 L0.5,-5.4 L-1,-6.5 L-1.5,-8.3 L-3.6,-7.6 L-4.6,-8.6 A9.5,9.5 0 0,1 0,-9.5Z"/><path d="M-8.1,-5.1 L-6.6,-6.6 L-5.4,-5.8 L-4.3,-6.8 L-3.8,-5.3 L-5.6,-4.3 L-7.4,-4.6Z"/><path d="M-2.9,-2 L-3.7,-0.9 L-3.1,1.1 L-4.9,2.2 L-5.1,3.7 L-3.3,5.6 L-2.1,8.2 L-0.9,9.6 L1.2,8.6 L1.6,6.8 L3.1,4.6 L3.7,2.8 L1.9,2.2 L0.2,0.9 L-1.1,-0.9Z"/><path d="M-8.9,3.2 L-8,3 L-7.2,5.6 L-7.7,6.2Z"/></g></g><rect x="1237" y="522.9" width="35.3" height="28.7" rx="5.6" fill="#eeeef8" stroke="#8f8f9b" stroke-width="1.125"/><rect x="1248.7" y="527.6" width="18" height="19.6" rx="3.4" fill="#87a980" stroke="#8f8f9b" stroke-width="1.125"/><rect x="1108.10" y="520.80" width="134.10" height="33.30" rx="5.60" fill="#87a980"/><path d="M1209.60,521.36 H1236.60 A5.04,5.04 0 0,1 1241.64,526.40 V548.50 A5.04,5.04 0 0,1 1236.60,553.54 H1209.60Z" fill="rgba(0,0,0,0.05)"/><path d="M1209.60,521.36 V553.54" stroke="rgba(0,0,0,0.1)" stroke-width="1" stroke-dasharray="1,1"/><rect x="1108.10" y="520.80" width="134.10" height="33.30" rx="5.60" fill="none" stroke="#8f8f9b" stroke-width="1.125"/><rect x="1220.3" y="528.4" width="11.7" height="1.6" fill="#fff"/><rect x="1220.3" y="532.8" width="11.7" height="1.6" fill="#fff"/><rect x="1220.3" y="537.2" width="11.7" height="1.6" fill="#fff"/><rect x="1220.3" y="541.6" width="11.7" height="1.6" fill="#fff"/><rect x="1220.3" y="546.0" width="11.7" height="1.6" fill="#fff"/><rect x="607.48" y="531.58" width="11.25" height="11.25" rx="3.4" fill="#d9d9d9" stroke="#8f8f9b" stroke-width="1.125"/><rect x="719.88" y="486.77" width="11.25" height="11.25" rx="3.4" fill="#d9d9d9" stroke="#8f8f9b" stroke-width="1.125"/><rect x="719.88" y="531.58" width="11.25" height="11.25" rx="3.4" fill="#d9d9d9" stroke="#8f8f9b" stroke-width="1.125"/><rect x="944.77" y="531.58" width="11.25" height="11.25" rx="3.4" fill="#d9d9d9" stroke="#8f8f9b" stroke-width="1.125"/><rect x="1102.08" y="531.88" width="11.25" height="11.25" rx="3.4" fill="#d9d9d9" stroke="#8f8f9b" stroke-width="1.125"/></g></svg>
<div class="t" style="left:432.30px;top:405.17px;font-size:15.750px;color:#333;font-weight:400;font-style:normal;">Server 2 ( webhook provider)</div>
<div class="t" style="left:499.80px;top:439.97px;font-size:15.750px;color:#333;font-weight:400;font-style:italic;">When triggered by the sensors, send a POST request to Server 3 with a payload containing event-related data.</div>
<div class="t" style="left:765.30px;top:485.37px;font-size:15.750px;color:#333;font-weight:400;font-style:italic;">Http response</div>
<div class="t" style="left:522.60px;top:530.17px;font-size:15.750px;color:#333;font-weight:400;font-style:italic;">Webhook</div>
<div class="t" style="left:768.30px;top:530.17px;font-size:15.750px;color:#333;font-weight:400;font-style:italic;">Request to Server 3</div>
<div class="t" style="left:1143.90px;top:530.17px;font-size:15.750px;color:#333;font-weight:400;font-style:italic;">debug 1</div>
</div></div><div id="frame"></div><div class="a lav" style="left:1492px;top:897px;width:8px;height:2px"></div></body></html>
